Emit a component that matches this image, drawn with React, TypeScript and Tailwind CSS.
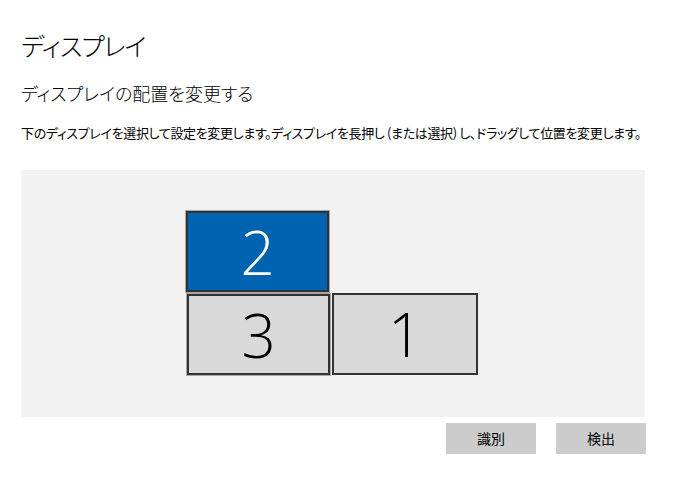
import React from "react";

const jp = "font-['Noto_Sans_CJK_JP','Noto_Sans',sans-serif] [font-feature-settings:'palt']";

type Monitor = {
  id: string;
  left: number;
  top: number;
  width: number;
  height: number;
  selected?: boolean;
  outlined?: boolean;
};

const monitors: Monitor[] = [
  { id: "2", left: 165, top: 41, width: 143, height: 81, selected: true, outlined: true },
  { id: "3", left: 166, top: 124, width: 143, height: 81, outlined: true },
  { id: "1", left: 311, top: 123, width: 146, height: 82 },
];

export default function App() {
  return (
    <main className={`min-h-screen bg-white px-[21px] pt-[25px] text-black ${jp}`}>
      <h1 className="whitespace-nowrap text-[25px] font-light leading-[40px] tracking-[-1px]">ディスプレイ</h1>
      <h2 className="mt-[14px] whitespace-nowrap text-[18px] font-light leading-[28px]">
        ディスプレイの配置を変更する
      </h2>
      <p className="mt-[16px] whitespace-nowrap text-[13px] leading-[20px] tracking-[-0.35px]">
        下のディスプレイを選択して設定を変更します。ディスプレイを長押し (または選択) し、ドラッグして位置を変更します。
      </p>

      <div className="relative mt-[27px] h-[247px] w-[624px] bg-[#f2f2f2]">
        {monitors.map((m) => (
          <div
            key={m.id}
            className={`absolute flex items-center justify-center border-2 border-[#333333] ${
              m.selected ? "bg-[#0063b1] text-white" : "bg-[#d9d9d9] text-black"
            } ${m.outlined ? "outline outline-1 outline-[#a6a6a6]" : ""}`}
            style={{ left: m.left, top: m.top, width: m.width, height: m.height }}
          >
            <span className="font-['Open_Sans','Noto_Sans',sans-serif] text-[60px] font-light leading-none">
              {m.id}
            </span>
          </div>
        ))}
      </div>

      <div className="mt-[6px] flex w-[625px] justify-end gap-[20px]">
        <button className="h-[31px] w-[90px] bg-[#cccccc] text-[14px] text-black">識別</button>
        <button className="h-[31px] w-[90px] bg-[#cccccc] text-[14px] text-black">検出</button>
      </div>
    </main>
  );
}
